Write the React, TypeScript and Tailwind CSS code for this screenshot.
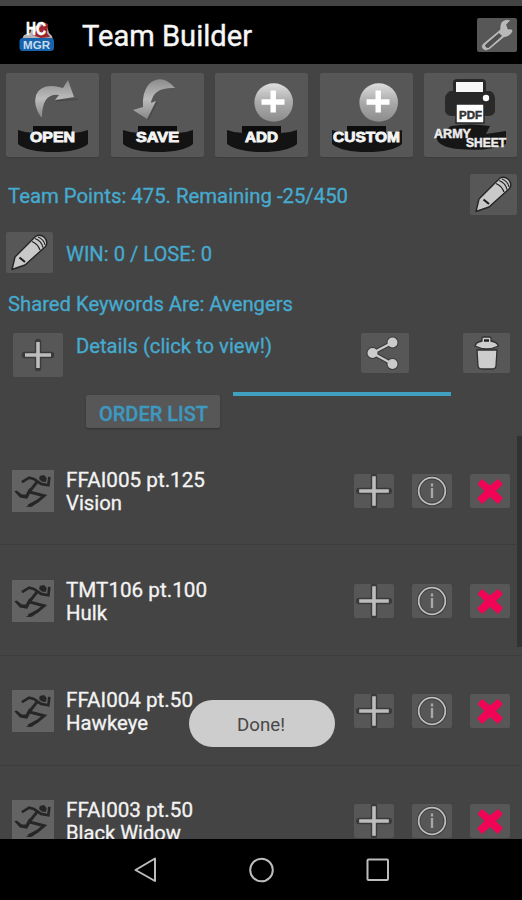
import React from "react";

const PANEL = "bg-[#575758] rounded-[2px]";

function Pedestal({ label, width }: { label: string; width: number }) {
  return (
    <g>
      <path d="M27 53h39v7H27z" fill="#0d0d0d" />
      <path d="M12 57Q20 60 28 60H66Q74 60 82 57V71Q72 79 47 79Q22 79 12 71Z" fill="#131313" />
      <text
        x="46.5"
        y="68.8"
        textAnchor="middle"
        textLength={width}
        lengthAdjust="spacingAndGlyphs"
        fontFamily="Liberation Sans, sans-serif"
        fontWeight="bold"
        fontSize="14.5"
        fill="#f4f4f4"
        stroke="#f4f4f4"
        strokeWidth=".9"
      >
        {label}
      </text>
    </g>
  );
}

function Tile({ children }: { children: React.ReactNode }) {
  return (
    <div className={`${PANEL} h-[84px] w-[93px] shadow-[0_1px_1px_#3c3c3c]`}>
      <svg viewBox="0 0 93 84" className="block h-[84px] w-[93px]">
        <defs>
          <linearGradient id="arrow" x1="0" y1="0" x2="0" y2="1">
            <stop offset="0" stopColor="#8c8c8c" />
            <stop offset=".5" stopColor="#bcbcbc" />
            <stop offset="1" stopColor="#888" />
          </linearGradient>
          <linearGradient id="ball" x1="0" y1="0" x2="0" y2="1">
            <stop offset="0" stopColor="#dedede" />
            <stop offset=".5" stopColor="#aaa" />
            <stop offset="1" stopColor="#8c8c8c" />
          </linearGradient>
        </defs>
        {children}
      </svg>
    </div>
  );
}

function PlusBall() {
  return (
    <g>
      <circle cx="58.7" cy="29.5" r="19.3" fill="url(#ball)" />
      <path d="M58.2 17.5v22M46.5 29h23" stroke="#fff" strokeWidth="5.4" />
    </g>
  );
}

function Pencil() {
  return (
    <svg viewBox="0 0 47 41" className="block h-[41px] w-[47px]">
      <path
        d="M6 37.500L9 25L29.500 4.500Q34 1.500 38.500 5.500Q42.500 10 39.500 14.500L19 33Z"
        fill="#c9c9c9"
        stroke="#242424"
        strokeWidth="1.400"
        strokeLinejoin="round"
      />
      <path d="M13.500 25.500L19 30" fill="none" stroke="#1a1a1a" strokeWidth="2" />
      <path
        d="M26 9.500Q32 12 34 18M29 6.500Q35.500 9 37 15.500M32 5Q38 7.500 39 13"
        fill="none"
        stroke="#262626"
        strokeWidth="1.300"
      />
    </svg>
  );
}

function Plus({ arm, w, h }: { arm: number; w: number; h: number }) {
  const cx = w / 2;
  const cy = h / 2;
  const d = `M${cx - arm} ${cy}H${cx + arm}M${cx} ${cy - arm}V${cy + arm}`;
  return (
    <svg viewBox={`0 0 ${w} ${h}`} width={w} height={h} className="block">
      <path d={d} stroke="#3a3a3a" strokeWidth="6.4" strokeLinecap="round" />
      <path d={d} stroke="#bdbdbd" strokeWidth="3.6" />
    </svg>
  );
}

function Runner() {
  return (
    <div className="h-[42px] w-[42px] bg-[#636363]">
      <svg viewBox="0 0 127 127" className="block h-[42px] w-[42px]" fill="#262626">
        <path d="M84 18L97 15L105 24L102 36L90 35L82 27Z" />
        <path d="M30 37L52 23L66 27L88 42L110 46L113 21" fill="none" stroke="#262626" strokeWidth="8" />
        <path d="M76 36L52 66L97 78L76 95L50 108" fill="none" stroke="#262626" strokeWidth="9" />
        <path d="M60 62L46 87L24 83L7 64L14 62L30 74L42 74L52 55Z" />
        <path d="M72 92L82 95L60 111L42 112Z" />
      </svg>
    </div>
  );
}

const team = [
  ["FFAI005 pt.125", "Vision", 139, 56],
  ["TMT106 pt.100", "Hulk", 141, 41],
  ["FFAI004 pt.50", "Hawkeye", 127, 82],
  ["FFAI003 pt.50", "Black Widow", 127, 115],
] as const;

/* One line of text set to a fixed advance width. */
function Line({
  text,
  width,
  size,
  fill,
  weight = 400,
  edge = 0.3,
}: {
  text: string;
  width: number;
  size: number;
  fill: string;
  weight?: number;
  edge?: number;
}) {
  return (
    <svg width={width} height="24" className="block shrink-0 overflow-visible">
      <text
        x="0"
        y="19"
        textLength={width}
        lengthAdjust="spacingAndGlyphs"
        fontFamily="Roboto, sans-serif"
        fontSize={size}
        fontWeight={weight}
        fill={fill}
        stroke={fill}
        strokeWidth={edge}
      >
        {text}
      </text>
    </svg>
  );
}

function Member({ row }: { row: (typeof team)[number] }) {
  return (
    <div className="flex h-[110.3px] shrink-0 items-start border-b border-[#3d3d3d] pl-[12px] pt-[34.500px]">
      <Runner />
      <div className="-mt-[2px] ml-[12px] w-[288px]">
        <Line text={row[0]} width={row[2]} size={20} fill="#f3f3f3" />
        <div className="-mt-[1px]">
          <Line text={row[1]} width={row[3]} size={20} fill="#f3f3f3" />
        </div>
      </div>
      <div className="mt-[4px] flex gap-[18px]">
        <div className={PANEL}>
          <Plus arm={14.8} w={40} h={34} />
        </div>
        <div className={PANEL}>
          <svg viewBox="0 0 40 34" className="block h-[34px] w-[40px]">
            <circle cx="20" cy="17" r="13.300" fill="none" stroke="#3a3a3a" strokeWidth="3.500" />
            <circle cx="20" cy="17" r="13.300" fill="none" stroke="#bdbdbd" strokeWidth="1.800" />
            <path d="M20 9.500v3M20 14v10" stroke="#a8a8a8" strokeWidth="2.300" />
          </svg>
        </div>
        <div className={PANEL}>
          <svg viewBox="0 0 40 34" className="block h-[34px] w-[40px]">
            <path
              d="M12 5L20 11.500L28 5L33 10L26 17L33 24L28 30L20 23L12 30L7 24.500L14.500 17L7.500 10Z"
              fill="#f00556"
            />
          </svg>
        </div>
      </div>
    </div>
  );
}

export default function App() {
  return (
    <div className="relative flex h-[900px] w-[522px] flex-col overflow-hidden bg-[#444] font-['Roboto',sans-serif]">
      <header className="mt-[6px] flex h-[58px] shrink-0 items-center bg-black pl-[19px] pr-[5px]">
        <svg viewBox="0 0 36 34" className="h-[34px] w-[36px]">
          <path d="M2 23L5 17L11 15L13 9L27 5L30 15L33 18L34 23Z" fill="#b5b5b5" />
          <path d="M25 5L29 6L28 15L31 19L22 20L13 17Z" fill="#9c242d" />
          <rect x=".5" y="20" width="34.5" height="13" rx="3.500" fill="#1763ac" />
          <text
            x="7"
            y="16.500"
            textLength="20"
            lengthAdjust="spacingAndGlyphs"
            fontFamily="Liberation Sans, sans-serif"
            fontWeight="bold"
            fontSize="17.500"
            fill="#fff"
            stroke="#fff"
            strokeWidth=".5"
          >
            HC
          </text>
          <text
            x="4"
            y="30.500"
            textLength="27"
            lengthAdjust="spacingAndGlyphs"
            fontFamily="Liberation Sans, sans-serif"
            fontWeight="bold"
            fontSize="10.500"
            fill="#c8dcf0"
          >
            MGR
          </text>
        </svg>
        <div className="ml-[27px] mt-[5px]">
          <svg width="170" height="34" className="block overflow-visible">
            <text
              x="0"
              y="25"
              textLength="170"
              lengthAdjust="spacingAndGlyphs"
              fontFamily="Roboto, sans-serif"
              fontSize="29"
              fill="#f7f7f7"
              stroke="#f7f7f7"
              strokeWidth=".4"
            >
              Team Builder
            </text>
          </svg>
        </div>
        <div className={`${PANEL} ml-auto h-[34px] w-[40px]`}>
          <svg viewBox="0 0 40 34" className="block h-[34px] w-[40px]">
            <path
              d="M5.500 26L23 11.500Q22 3 29 1.500L34 2L29.500 6.500L31 11L34.500 11L36 13Q33 19 27 19.500L12.500 31.500Q8 34 5.500 31Q3.500 28.500 5.500 26Z"
              fill="#b9b9b9"
              stroke="#444"
              strokeWidth=".6"
            />
            <path d="M8.500 27L22 15.500L24.500 18L11.500 29.500Q8.500 30 8.500 27Z" fill="#505050" stroke="#3a3a3a" strokeWidth=".7" />
          </svg>
        </div>
      </header>

      <div className="mt-[9px] flex shrink-0 justify-between pl-[6px] pr-[5px]">
        <Tile>
          <path
            d="M35 44Q27 33 30 22Q36 9 57 15L62 7L68 24L49 27L53 22Q36 20 36 44Z"
            fill="url(#arrow)"
          />
          <path d="M50 28L72 26" stroke="#444" strokeWidth="1.200" />
          <Pedestal label="OPEN" width={45} />
        </Tile>
        <Tile>
          <path
            d="M64 15Q51 0 38 11Q31 19 32 34L22 37L36 46L45 28L40 30Q42 14 64 15Z"
            fill="url(#arrow)"
          />
          <path d="M37 47L46 29" stroke="#444" strokeWidth="1" />
          <Pedestal label="SAVE" width={43} />
        </Tile>
        <Tile>
          <PlusBall />
          <Pedestal label="ADD" width={33} />
        </Tile>
        <Tile>
          <PlusBall />
          <Pedestal label="CUSTOM" width={67} />
        </Tile>
        <Tile>
          <rect x="29" y="6" width="33" height="20" rx="4" fill="#292929" />
          <path d="M26 18H66Q71 20 71 26V39Q69 43 64 43H27Q21 42 21 37V26Q21 21 26 18Z" fill="#292929" />
          <path d="M32 9h27v10H32z" fill="#f8f8f8" />
          <circle cx="62" cy="25" r="3.200" fill="#fff" />
          <path d="M32 31h28v19H32z" fill="#fff" stroke="#292929" strokeWidth="1.500" />
          <path d="M27 53Q46 50 66 53L62 61L82 58V71Q65 79 34 76Q14 74 12 64Z" fill="#161616" />
          <g fontFamily="Liberation Sans, sans-serif" fontWeight="bold">
            <text x="35" y="46" textLength="23" lengthAdjust="spacingAndGlyphs" fontSize="11.500" fill="#333" stroke="#333" strokeWidth=".5">
              PDF
            </text>
            <g fill="#ececec" stroke="#ececec" strokeWidth=".5">
              <text x="10" y="64.500" textLength="37" lengthAdjust="spacingAndGlyphs" fontSize="12.500">
                ARMY
              </text>
              <text x="42" y="74" textLength="40" lengthAdjust="spacingAndGlyphs" fontSize="12">
                SHEET
              </text>
            </g>
          </g>
        </Tile>
      </div>

      <div className="mt-[17px] flex h-[41px] shrink-0 items-center justify-between pl-[8px] pr-[5px]">
        <div className="mt-[2px]">
          <Line text="Team Points: 475. Remaining -25/450" width={340} size={20} fill="#46abd0" />
        </div>
        <div className={PANEL}>
          <Pencil />
        </div>
      </div>

      <div className="mt-[17px] flex h-[41px] shrink-0 items-center pl-[6px]">
        <div className={`${PANEL} mr-[13px]`}>
          <Pencil />
        </div>
        <div className="mt-[2px]">
          <Line text="WIN: 0 / LOSE: 0" width={146} size={20} fill="#46abd0" />
        </div>
      </div>

      <div className="mt-[19px] shrink-0 pl-[8px]">
        <Line text="Shared Keywords Are: Avengers" width={285} size={20} fill="#46abd0" />
      </div>

      <div className="mt-[17px] flex h-[44px] shrink-0 items-start pl-[13px]">
        <div className={PANEL}>
          <Plus arm={13} w={50} h={44} />
        </div>
        <div className="ml-[13px] mt-[1px] w-[285px]">
          <Line text="Details (click to view!)" width={196} size={20} fill="#46abd0" />
        </div>
        <div className={PANEL}>
          <svg viewBox="0 0 48 40" className="block h-[40px] w-[48px]">
            <g stroke="#3a3a3a" fill="#3a3a3a" strokeWidth="4.500">
              <path d="M31.500 9.500L11.500 20L31.500 31" fill="none" />
              <circle cx="31.500" cy="9.500" r="3.800" />
              <circle cx="11.500" cy="20" r="3.800" />
              <circle cx="31.500" cy="31" r="3.800" />
            </g>
            <g stroke="#cbcbcb" fill="#cbcbcb" strokeWidth="2.200">
              <path d="M31.500 9.500L11.500 20L31.500 31" fill="none" />
              <circle cx="31.500" cy="9.500" r="3.900" />
              <circle cx="11.500" cy="20" r="3.900" />
              <circle cx="31.500" cy="31" r="3.900" />
            </g>
          </svg>
        </div>
        <div className={`${PANEL} ml-[54px]`}>
          <svg viewBox="0 0 47 40" className="block h-[40px] w-[47px]">
            <g fill="#cdcdcd" stroke="#303030" strokeWidth="1.300">
              <path d="M14 17H34L33 33Q32.500 36 29 36H19Q15.500 36 15 33Z" />
              <path d="M12 13Q13 9 19 8V5Q19 4 21 4H26Q28 4 28 5V8Q34 9 35.500 13Q29 16 24 16Q18 16 12 13Z" />
            </g>
            <path d="M21 7.500h5" stroke="#222" strokeWidth="2.500" />
          </svg>
        </div>
      </div>

      <div className="mt-[15px] flex h-[43px] shrink-0 items-start pl-[86px]">
        <div className="mt-[3px] flex h-[33px] w-[134px] justify-center rounded-[2px] bg-[#575758] pt-[7px] shadow-[0_1px_2px_#303030]">
          <Line text="ORDER LIST" width={109} size={20} fill="#3d99c0" weight={500} />
        </div>
        <div className="ml-[13px] h-[4px] w-[218px] bg-[#3fa1bf]" />
      </div>

      <main className="relative flex h-[404px] shrink-0 flex-col overflow-hidden">
        {team.map((row) => (
          <Member key={row[0]} row={row} />
        ))}
        <div className="absolute right-0 top-[1px] h-[211px] w-[5px] bg-[#323232]" />
      </main>

      <nav className="flex h-[61px] shrink-0 items-start bg-black pl-[133px] pt-[17px]">
        <svg viewBox="0 0 260 28" className="h-[28px] w-[260px]" fill="none" stroke="#bdbdbd" strokeWidth="2" strokeLinejoin="round">
          <path d="M2.500 14L22 2.500V25Z" />
          <circle cx="128.500" cy="14" r="11.300" />
          <rect x="234.500" y="3.500" width="20.500" height="20.500" rx="1" />
        </svg>
      </nav>

      <div className="absolute left-[188.500px] top-[700px] flex h-[47px] w-[146px] items-center justify-center rounded-full bg-[#cdcdcd] pr-[2px]">
        <Line text="Done!" width={48} size={18} fill="#484848" edge={0} />
      </div>
    </div>
  );
}
